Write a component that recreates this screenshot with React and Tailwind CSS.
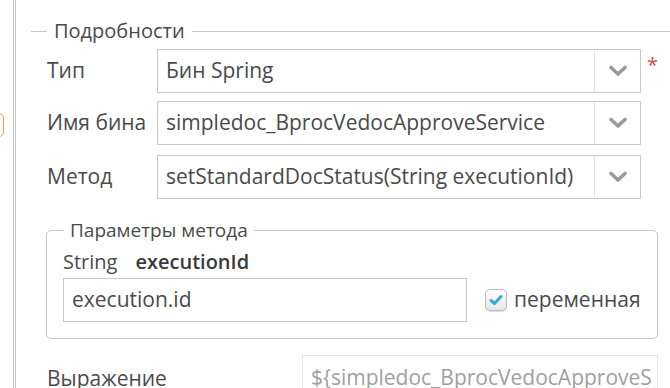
import React from "react";

const Chevron = () => (
  <svg width="20" height="12" viewBox="0 0 20 12" fill="none">
    <path d="M3 2.5 L10 9 L17 2.5" stroke="#9a9a9a" strokeWidth="3.6" strokeLinecap="round" strokeLinejoin="round" />
  </svg>
);

const Select = ({ value }) => (
  <div className="flex h-[44px] w-[484px] border border-[#c9c9c9] bg-white">
    <div className="flex flex-1 items-center overflow-hidden whitespace-nowrap pl-[8px] text-[21px] text-[#4a4a4a]">{value}</div>
    <div className="flex w-[46px] items-center justify-center border-l border-[#e2e2e2]">
      <Chevron />
    </div>
  </div>
);

const Row = ({ label, value, star, className }) => (
  <div className={"flex items-center " + (className || "")}>
    <div className="w-[110px] text-[21px] text-[#4a4a4a]">{label}</div>
    <Select value={value} />
    {star && <span className="-mt-[12px] ml-[6px] text-[20px] leading-none text-[#e8483b]">*</span>}
  </div>
);

export default function App() {
  return (
    <div className="flex h-[388px] w-[670px] overflow-hidden bg-white text-[#4a4a4a]" style={{ fontFamily: '"Open Sans", "Noto Sans", sans-serif' }}>
      <div className="relative w-[13px] shrink-0">
        <div className="absolute -left-[8px] top-[113px] h-[24px] w-[12px] rounded-[5px] border-[1.5px] border-[#e0a050] bg-white"></div>
      </div>
      <div className="w-px shrink-0 bg-[#c8c8c8]"></div>
      <div className="w-px shrink-0 bg-white"></div>
      <div className="w-px shrink-0 bg-[#c8c8c8]"></div>
      <div className="flex min-w-0 flex-1 flex-col pl-[15px]">
        <div className="mt-[21px] flex h-[22px] items-center">
          <div className="h-px w-[16px] bg-[#c8c8c8]"></div>
          <div className="px-[7px] text-[20px] leading-none text-[#4a4a4a]">Подробности</div>
          <div className="h-px flex-1 bg-[#c8c8c8]"></div>
        </div>
        <div className="flex flex-col pl-[16px]">
          <Row className="mt-[8px]" label="Тип" value="Бин Spring" star />
          <Row className="mt-[8px]" label="Имя бина" value="simpledoc_BprocVedocApproveService" />
          <Row className="mt-[10px]" label="Метод" value="setStandardDocStatus(String executionId)" />
          <fieldset className="mt-[20px] -ml-px w-[611px] rounded-[5px] border border-[#c9c9c9] px-[16px] pb-[16px]">
            <legend className="ml-[1px] px-[6px] text-[19px] leading-[22px] text-[#4a4a4a]">Параметры метода</legend>
            <div className="mt-[6px] flex h-[30px] items-center text-[20px]">
              <span>String</span>
              <span className="ml-[18px] font-semibold text-[#3a3a3a]">executionId</span>
            </div>
            <div className="mt-[1px] flex items-center">
              <div className="flex h-[44px] w-[404px] items-center border border-[#c9c9c9] pl-[8px] text-[21px]">execution.id</div>
              <div className="ml-[18px] flex h-[22px] w-[22px] items-center justify-center rounded-[5px] border border-[#bdbdbd] bg-gradient-to-b from-white to-[#e6e6e6] shadow-[0_1px_1px_rgba(0,0,0,0.15)]">
                <svg width="14" height="12" viewBox="0 0 14 12">
                  <path d="M2 6.5 L5.5 9.5 L12 2.5" stroke="#3aa8e0" strokeWidth="3" fill="none" strokeLinecap="round" strokeLinejoin="round" />
                </svg>
              </div>
              <span className="ml-[7px] text-[21px]">переменная</span>
            </div>
          </fieldset>
          <div className="mt-[16px] flex items-start">
            <div className="mt-[8px] w-[255px] shrink-0 text-[21px]">Выражение</div>
            <div className="h-[44px] w-[356px] shrink-0 border border-[#e6e6e6] pl-[8px] pr-[5px] pt-[6px]">
              <div className="overflow-hidden whitespace-nowrap text-[21px] text-[#a0a0a0]">{"${simpledoc_BprocVedocApproveService.setStandardDocStatus(execution.id)}"}</div>
            </div>
          </div>
        </div>
      </div>
    </div>
  );
}
